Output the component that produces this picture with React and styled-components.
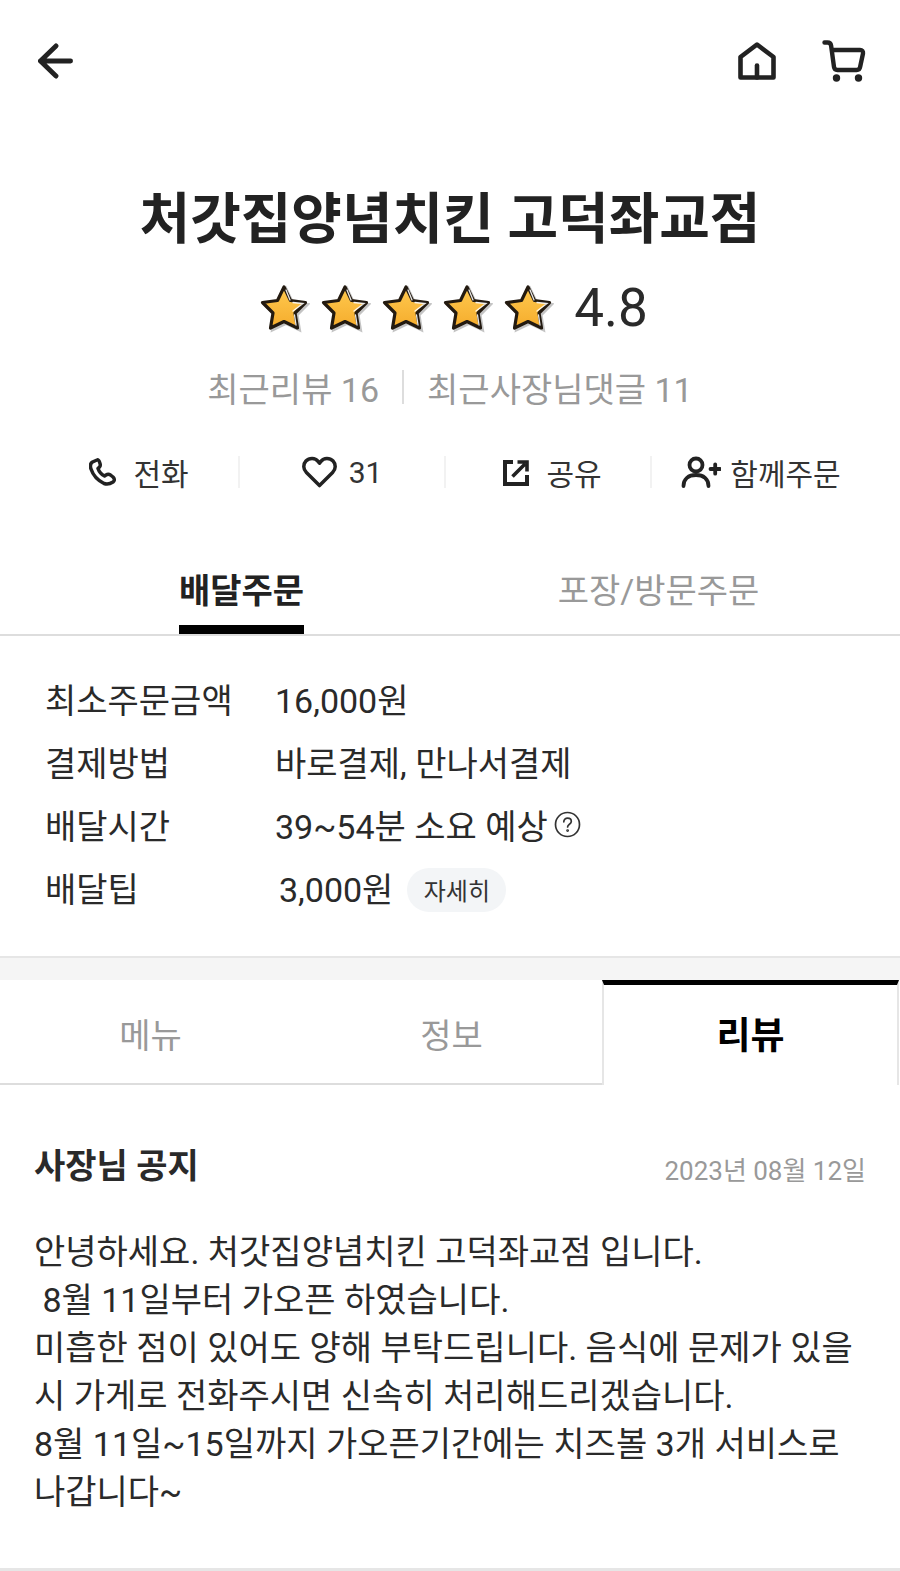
import React from "react";
import styled, { createGlobalStyle } from "styled-components";

const Global = createGlobalStyle`
  html, body { margin: 0; padding: 0; background: #fff; }
  * { box-sizing: border-box; }
  body { font-family: "Roboto", "Noto Sans CJK KR", sans-serif; color: #222; }
`;

const Page = styled.div`
  width: 900px;
  height: 1571px;
  overflow: hidden;
  background: #fff;
  display: flex;
  flex-direction: column;
`;

const TopBar = styled.header`
  height: 122px;
  padding: 0 34px 0 38px;
  display: flex;
  align-items: center;
  justify-content: space-between;
`;

const TopIcons = styled.div`
  display: flex;
  align-items: center;
  gap: 46px;
`;

const Title = styled.h1`
  margin: 61px 0 0;
  height: 72px;
  line-height: 72px;
  font-size: 55px;
  font-weight: 700;
  text-align: center;
  color: #222;
`;

const RatingRow = styled.div`
  margin-top: 21px;
  height: 64px;
  padding-left: 8px;
  display: flex;
  align-items: center;
  justify-content: center;
  gap: 11px;
`;

const Score = styled.span`
  margin-left: 9px;
  font-size: 53px;
  color: #2a2a2a;
`;

const ReviewCounts = styled.div`
  margin-top: 25px;
  height: 44px;
  display: flex;
  align-items: center;
  justify-content: center;
  font-size: 34px;
  color: #999;
`;

const CountDivider = styled.i`
  width: 2px;
  height: 34px;
  margin: 0 23px;
  background: #ddd;
`;

const Actions = styled.div`
  margin: 47px 0 0 32px;
  width: 824px;
  height: 32px;
  display: grid;
  grid-template-columns: repeat(4, 206px);
  grid-template-rows: 32px;
`;

const Action = styled.div`
  display: flex;
  align-items: center;
  justify-content: center;
  gap: ${(p) => p.$gap || 10}px;
  padding-left: ${(p) => p.$shift || 0}px;
  font-size: 30px;
  color: #333;
  border-left: ${(p) => (p.$first ? "none" : "2px solid #f2f2f2")};
`;

const OrderTabs = styled.div`
  margin-top: 60px;
  height: 88px;
  display: grid;
  grid-template-columns: 413px 1fr;
  padding: 0 31px 0 35px;
  border-bottom: 2px solid #ddd;
`;

const OrderTab = styled.div`
  display: flex;
  justify-content: center;
  height: 86px;
`;

const OrderLabel = styled.span`
  height: 86px;
  line-height: 86px;
  font-size: 34px;
  font-weight: ${(p) => (p.$active ? 700 : 400)};
  color: ${(p) => (p.$active ? "#222" : "#999")};
  border-bottom: ${(p) => (p.$active ? "9px solid #000" : "none")};
`;

const Info = styled.div`
  padding: 31px 0 0 45px;
  height: 322px;
  border-bottom: 2px solid #e6e6e6;
`;

const InfoRow = styled.div`
  display: grid;
  grid-template-columns: 230px 1fr;
  align-items: center;
  height: 63px;
  font-size: 34px;
  color: #2a2a2a;
`;

const InfoValue = styled.div`
  display: flex;
  align-items: center;
  gap: ${(p) => p.$gap || 0}px;
  padding-left: ${(p) => p.$indent || 0}px;
`;

const Pill = styled.span`
  height: 44px;
  width: 99px;
  margin-top: 4px;
  border-radius: 22px;
  background: #f3f5f7;
  font-size: 24px;
  display: flex;
  align-items: center;
  justify-content: center;
  color: #333;
`;

const Band = styled.div`
  height: 22px;
  background: #f5f5f5;
`;

const MainTabs = styled.nav`
  height: 105px;
  display: grid;
  grid-template-columns: 301px 301px 297px;
`;

const MainTab = styled.div`
  display: flex;
  align-items: center;
  justify-content: center;
  padding: ${(p) => (p.$active ? "0 0 4px" : "4px 0 0")};
  font-size: ${(p) => (p.$active ? 37 : 34)}px;
  font-weight: ${(p) => (p.$active ? 700 : 400)};
  color: ${(p) => (p.$active ? "#000" : "#999")};
  border-bottom: ${(p) => (p.$active ? "none" : "2px solid #ddd")};
  border-top: ${(p) => (p.$active ? "5px solid #000" : "none")};
  border-left: ${(p) => (p.$active ? "2px solid #e6e6e6" : "none")};
  border-right: ${(p) => (p.$active ? "2px solid #e6e6e6" : "none")};
`;

const Notice = styled.section`
  flex: 1;
  padding: 0 34px;
  border-bottom: 3px solid #e6e6e6;
`;

const NoticeHead = styled.div`
  margin-top: 56px;
  height: 48px;
  display: flex;
  align-items: center;
  justify-content: space-between;
`;

const NoticeTitle = styled.h2`
  margin: 0 0 4px;
  font-size: 34px;
  font-weight: 700;
  color: #2a2a2a;
`;

const NoticeDate = styled.span`
  margin-top: 6px;
  font-size: 26px;
  color: #999;
`;

const NoticeBody = styled.p`
  margin: 39px 0 0;
  font-size: 34px;
  line-height: 48px;
  color: #2a2a2a;
  white-space: pre-wrap;
`;

const STAR = "M24 4 L30.500 17.500 L45.500 19.500 L35 30 L37.500 45 L24 38.500 L10.500 45 L13 30 L2.500 19.500 L17.500 17.500 Z";

const Star = () => (
  <svg width="50" height="50" viewBox="0 0 50 50">
    <defs>
      <linearGradient id="starFill" x1="0" y1="0" x2="0" y2="1">
        <stop offset="0" stopColor="#ffc94f" />
        <stop offset="1" stopColor="#f5ac2c" />
      </linearGradient>
    </defs>
    <path d={STAR} fill="#8a8a8a" opacity="0.5" stroke="#8a8a8a" strokeWidth="3" transform="translate(2 2)" />
    <path d={STAR} fill="url(#starFill)" stroke="#231a10" strokeWidth="3.200" strokeLinejoin="round" />
    <path d="M26 7 L30 17 M33 19.500 L43 20.500 L33 28 M34.500 32 L36 42" fill="none" stroke="#fff" strokeWidth="1.300" strokeLinecap="round" opacity="0.9" />
  </svg>
);

const BackIcon = () => (
  <svg width="35" height="36" viewBox="0 0 36 36" fill="none" stroke="#222" strokeWidth="5" strokeLinecap="round" strokeLinejoin="round">
    <path d="M33.500 18H2.500M18.500 2.500 2.500 18l16 15.500" />
  </svg>
);

const HomeIcon = () => (
  <svg width="38" height="38" viewBox="0 0 38 38" fill="none" stroke="#222" strokeWidth="4.600" strokeLinecap="round" strokeLinejoin="round">
    <path d="M2.500 15 19 2.500 35.500 15v20.500h-33Z" />
    <path d="M19 23.500v12" />
  </svg>
);

const CartIcon = () => (
  <svg width="44" height="42" viewBox="0 0 44 42" fill="none" stroke="#222" strokeWidth="4.400" strokeLinecap="round" strokeLinejoin="round">
    <path d="M2.500 2.500h3c2 0 3.300 1.200 3.600 3.200L12 27c.3 2 1.500 3 3.400 3h19.200c2 0 3.200-1 3.500-3L41 13.500c.3-2.300-.8-3.500-3-3.500H10" />
    <circle cx="14.500" cy="38" r="1.500" fill="#222" />
    <circle cx="36.500" cy="38" r="1.500" fill="#222" />
  </svg>
);

const PhoneIcon = () => (
  <svg width="27" height="28" viewBox="0 0 27 28" fill="none" stroke="#222" strokeWidth="3.500" strokeLinejoin="round">
    <path d="M8 2 3.500 4C1 5.500 1 8 2 11c2 6 7 11.500 13 14.500 3 1 6 .5 9-1.500 2-1.500 1.500-3.500 0-5l-2.500-2c-1.500-1-3-1-4.500 0l-1.500 1c-3-1.500-5.500-4.500-6.500-7.500L10.500 9c1-1 1-2 .5-3.500L10.500 4C10 2.500 9 1.500 8 2Z" />
  </svg>
);

const HeartIcon = () => (
  <svg width="35" height="32" viewBox="0 0 36 33" fill="none" stroke="#222" strokeWidth="3.600" strokeLinejoin="round">
    <path d="M18 30.500 4.500 17C1 13.500 1 8.500 4 5.200 7.500 1.500 13.500 1.500 16.500 5.500L18 7.500l1.500-2c3-4 9-4 12.500-.3 3 3.300 3 8.300-.5 11.800Z" />
  </svg>
);

const ShareIcon = () => (
  <svg width="26" height="27" viewBox="0 0 26 27" fill="none" stroke="#222" strokeWidth="4">
    <path d="M10 3H2v22h22v-9" />
    <path d="M9.500 17.500 22 5M14.500 3H24v9.500" strokeWidth="3.600" />
  </svg>
);

const AddUserIcon = () => (
  <svg width="40" height="32" viewBox="0 0 40 32" fill="none" stroke="#222" strokeWidth="3.800" strokeLinecap="round">
    <circle cx="15" cy="9" r="6.500" />
    <path d="M2.500 30c0-7 5-11 12.500-11s12.500 4 12.500 11" />
    <path d="M29.500 13h9.500M34.200 8.300v9.400" />
  </svg>
);

const HelpIcon = () => (
  <svg width="27" height="27" viewBox="0 0 27 27" fill="none" stroke="#333" strokeWidth="1.700" strokeLinecap="round">
    <circle cx="13.500" cy="13.500" r="12" />
    <path d="M9.800 10.800c0-2.200 1.700-3.600 3.800-3.600s3.700 1.300 3.700 3.200c0 2.800-3.700 2.800-3.700 5.600" />
    <circle cx="13.600" cy="19.600" r="0.600" />
  </svg>
);

export default function App() {
  return (
    <Page>
      <Global />
      <TopBar>
        <BackIcon />
        <TopIcons>
          <HomeIcon />
          <CartIcon />
        </TopIcons>
      </TopBar>

      <Title>처갓집양념치킨 고덕좌교점</Title>
      <RatingRow>
        {[1, 2, 3, 4, 5].map((n) => (
          <Star key={n} />
        ))}
        <Score>4.8</Score>
      </RatingRow>
      <ReviewCounts>
        <span>최근리뷰 16</span>
        <CountDivider />
        <span>최근사장님댓글 11</span>
      </ReviewCounts>

      <Actions>
        <Action $first $gap={17} $shift={8}>
          <PhoneIcon />
          전화
        </Action>
        <Action $gap={12}>
          <HeartIcon />
          31
        </Action>
        <Action $gap={17} $shift={9}>
          <ShareIcon />
          공유
        </Action>
        <Action $gap={9} $shift={14}>
          <AddUserIcon />
          함께주문
        </Action>
      </Actions>

      <OrderTabs>
        <OrderTab>
          <OrderLabel $active>배달주문</OrderLabel>
        </OrderTab>
        <OrderTab>
          <OrderLabel>포장/방문주문</OrderLabel>
        </OrderTab>
      </OrderTabs>

      <Info>
        <InfoRow>
          <span>최소주문금액</span>
          <InfoValue>16,000원</InfoValue>
        </InfoRow>
        <InfoRow>
          <span>결제방법</span>
          <InfoValue>바로결제, 만나서결제</InfoValue>
        </InfoRow>
        <InfoRow>
          <span>배달시간</span>
          <InfoValue $gap={6}>
            39~54분 소요 예상
            <HelpIcon />
          </InfoValue>
        </InfoRow>
        <InfoRow>
          <span>배달팁</span>
          <InfoValue $gap={14} $indent={4}>
            3,000원
            <Pill>자세히</Pill>
          </InfoValue>
        </InfoRow>
      </Info>

      <Band />

      <MainTabs>
        <MainTab>메뉴</MainTab>
        <MainTab>정보</MainTab>
        <MainTab $active>리뷰</MainTab>
      </MainTabs>

      <Notice>
        <NoticeHead>
          <NoticeTitle>사장님 공지</NoticeTitle>
          <NoticeDate>2023년 08월 12일</NoticeDate>
        </NoticeHead>
        <NoticeBody>{`안녕하세요. 처갓집양념치킨 고덕좌교점 입니다.
 8월 11일부터 가오픈 하였습니다.
미흡한 점이 있어도 양해 부탁드립니다. 음식에 문제가 있을
시 가게로 전화주시면 신속히 처리해드리겠습니다.
8월 11일~15일까지 가오픈기간에는 치즈볼 3개 서비스로
나갑니다~`}</NoticeBody>
      </Notice>
    </Page>
  );
}
